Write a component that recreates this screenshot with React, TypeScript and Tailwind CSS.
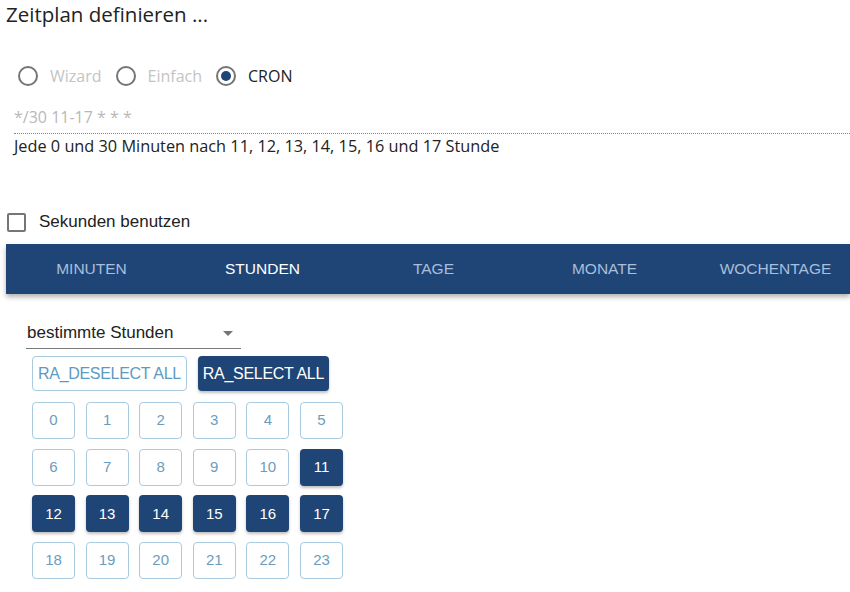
const blue = "bg-[#1f4577]";

const tabs = ["Minuten", "Stunden", "Tage", "Monate", "Wochentage"];
const selected = [11, 12, 13, 14, 15, 16, 17];

function Radio({ label, checked }: { label: string; checked?: boolean }) {
  return (
    <label className="flex items-center gap-[12px]">
      <span className="w-[20px] h-[20px] rounded-full border-2 border-[#757575] grid place-items-center">
        {checked && <span className="w-[10px] h-[10px] rounded-full bg-[#1f4577]" />}
      </span>
      <span className={checked ? "text-[#222]" : "text-[#c4c4c4]"}>{label}</span>
    </label>
  );
}

export default function App() {
  return (
    <div className="w-[850px] h-[592px] bg-white overflow-hidden font-['Open_Sans',sans-serif] text-[#222]">
      <div className="pl-[6px] pt-[1px] text-[20.5px] leading-[26px] text-[#222]">Zeitplan definieren ...</div>

      <div className="flex items-center gap-[14px] pl-[18px] mt-[38px] text-[16px] leading-[22px]">
        <Radio label="Wizard" />
        <Radio label="Einfach" />
        <Radio label="CRON" checked />
      </div>

      <div className="ml-[14px] mt-[19px] pb-[5px] border-b border-dotted border-[#888] text-[16px] leading-[22px] text-[#b8b8b8]">
        */30 11-17 * * *
      </div>
      <div className="ml-[14px] text-[16.3px] leading-[24px] text-[#222]">
        Jede 0 und 30 Minuten nach 11, 12, 13, 14, 15, 16 und 17 Stunde
      </div>

      <label className="flex items-center gap-[13px] pl-[7px] mt-[53px] font-['Liberation_Sans',sans-serif] text-[17px] leading-[22px]">
        <span className="w-[19px] h-[19px] rounded-[2px] border-2 border-[#767676]" />
        <span>Sekunden benutzen</span>
      </label>

      <div className={`ml-[6px] mt-[11px] h-[50px] ${blue} flex shadow-[0_3px_5px_rgba(0,0,0,0.3)] font-['Liberation_Sans',sans-serif]`}>
        {tabs.map((t) => (
          <div
            key={t}
            className={`w-[171px] shrink-0 grid place-items-center uppercase text-[15.5px] ${t === "Stunden" ? "text-white" : "text-[#a9bedb]"}`}
          >
            {t}
          </div>
        ))}
      </div>

      <div className="ml-[26px] mt-[29px] w-[215px] border-b border-[#7a7a7a] flex items-center justify-between pb-[5px] font-['Liberation_Sans',sans-serif] text-[17px] leading-[20px]">
        <span className="pl-[1px]">bestimmte Stunden</span>
        <svg width="10" height="5" viewBox="0 0 10 5" className="mr-[8px]">
          <path d="M0 0h10L5 5z" fill="#757575" />
        </svg>
      </div>

      <div className="ml-[32px] mt-[7px] flex gap-[11px] font-['Liberation_Sans',sans-serif] text-[16px]">
        <button className="h-[35px] px-[5px] rounded-[4px] border border-[#a8cbe0] text-[#5d9ac2] tracking-[-0.3px]">
          RA_DESELECT ALL
        </button>
        <button className={`h-[35px] px-[5px] rounded-[4px] ${blue} text-white tracking-[-0.3px] shadow-[0_2px_3px_rgba(0,0,0,0.25)]`}>
          RA_SELECT ALL
        </button>
      </div>

      <div className="ml-[32px] mt-[11px] grid grid-cols-[repeat(6,43px)] gap-x-[10.6px] gap-y-[9.7px] font-['Liberation_Sans',sans-serif] text-[15px]">
        {Array.from({ length: 24 }, (_, i) => {
          const on = selected.includes(i);
          return (
            <div
              key={i}
              className={
                on
                  ? `h-[37px] rounded-[4px] ${blue} text-white grid place-items-center shadow-[0_2px_3px_rgba(0,0,0,0.25)]`
                  : "h-[37px] rounded-[4px] border border-[#a8cbe0] text-[#6c9cbd] grid place-items-center"
              }
            >
              {i}
            </div>
          );
        })}
      </div>
    </div>
  );
}
